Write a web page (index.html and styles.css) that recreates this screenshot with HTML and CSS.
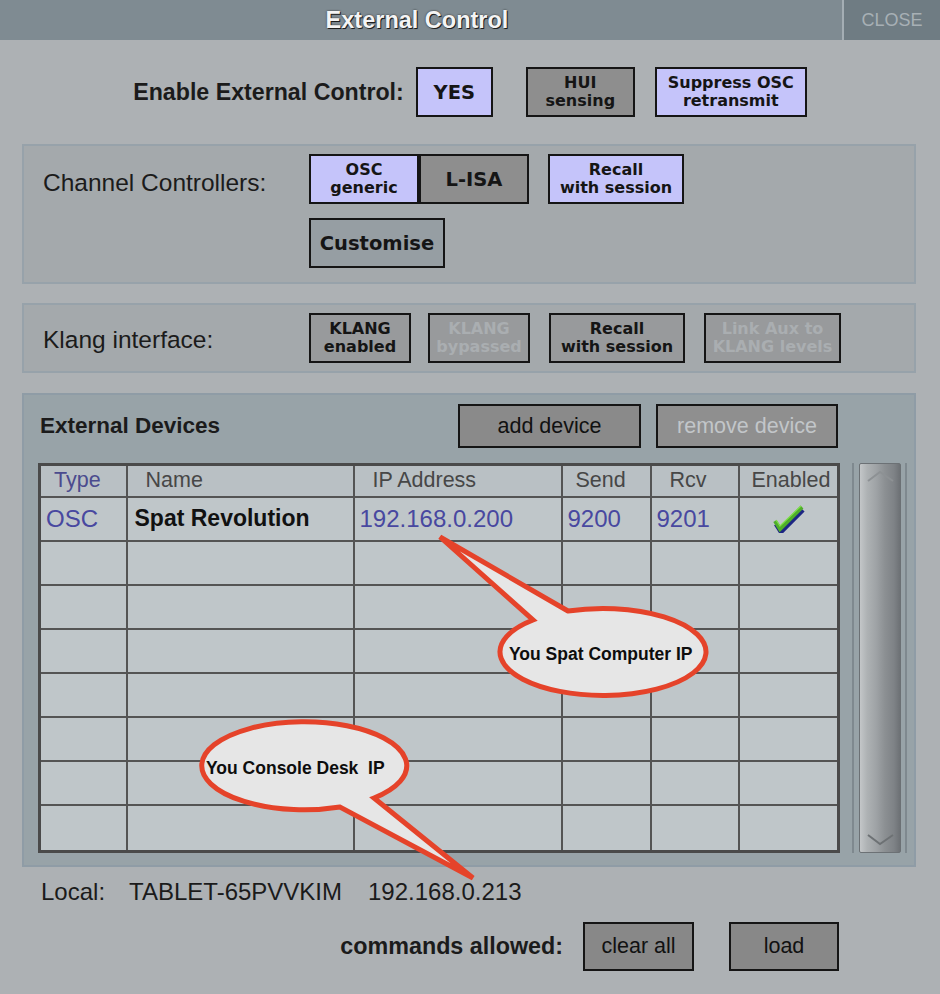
FILE: index.html
```html
<!DOCTYPE html>
<html lang="en">
<head>
  <meta charset="UTF-8">
  <title>External Control</title>
  <link rel="stylesheet" href="styles.css">
</head>
<body>
<div class="titlebar">
  <div class="title">External Control</div>
  <div class="close">CLOSE</div>
</div>

<div class="enable-row">
  <span class="enable-label">Enable External Control:</span>
  <div class="btn btn-one btn-on w-yes">YES</div>
  <div class="btn btn-two btn-dark w-hui">HUI<br>sensing</div>
  <div class="btn btn-two btn-on w-suppress">Suppress OSC<br>retransmit</div>
</div>

<!-- Channel controllers -->
<section class="panel panel-channel">
  <div class="panel-label">Channel Controllers:</div>
  <div class="btn-stack">
    <div class="btn-row">
      <div class="btn btn-two btn-on w110">OSC<br>generic</div>
      <div class="btn btn-one btn-dark w110">L-ISA</div>
      <div class="btn btn-two btn-on w136 gap19">Recall<br>with session</div>
    </div>
    <div class="btn-row">
      <div class="btn btn-one btn-steel w136">Customise</div>
    </div>
  </div>
</section>

<!-- Klang -->
<section class="panel panel-klang">
  <div class="panel-label">Klang interface:</div>
  <div class="btn-row">
    <div class="btn btn-two btn-grey w102">KLANG<br>enabled</div>
    <div class="btn btn-two btn-grey btn-off w102 gap17">KLANG<br>bypassed</div>
    <div class="btn btn-two btn-grey w136 gap19">Recall<br>with session</div>
    <div class="btn btn-two btn-grey btn-off w137 gap19">Link Aux to<br>KLANG levels</div>
  </div>
</section>

<!-- External devices -->
<section class="panel panel-devices">
  <div class="devices-head">
    <div class="devices-title">External Devices</div>
    <div class="btn btn-flat w183">add device</div>
    <div class="btn btn-flat btn-flat-off w182 gap15">remove device</div>
  </div>
  <div class="devices-body">
    <table class="devices">
      <colgroup>
        <col style="width:87px"><col style="width:227px"><col style="width:208px">
        <col style="width:89px"><col style="width:88px"><col style="width:100px">
      </colgroup>
      <thead>
        <tr>
          <th class="col-type">Type</th>
          <th class="col-name">Name</th>
          <th class="col-ip">IP Address</th>
          <th class="col-send">Send</th>
          <th class="col-rcv">Rcv</th>
          <th class="col-en">Enabled</th>
        </tr>
      </thead>
      <tbody>
        <tr>
          <td class="blue">OSC</td>
          <td class="dev-name">Spat Revolution</td>
          <td class="blue">192.168.0.200</td>
          <td class="blue">9200</td>
          <td class="blue">9201</td>
          <td class="check">
            <svg width="34" height="30" viewBox="0 0 34 30">
              <polyline points="4,19 9,27 31,5" fill="none" stroke="#1c2583" stroke-width="4.5" transform="translate(1,2)"/>
              <polyline points="4,18 9,26 31,4" fill="none" stroke="#4fae2a" stroke-width="4"/>
              <polyline points="5,17 9,23 30,3" fill="none" stroke="#7fe04a" stroke-width="1.2"/>
            </svg>
          </td>
        </tr>
        <tr><td></td><td></td><td></td><td></td><td></td><td></td></tr>
        <tr><td></td><td></td><td></td><td></td><td></td><td></td></tr>
        <tr><td></td><td></td><td></td><td></td><td></td><td></td></tr>
        <tr><td></td><td></td><td></td><td></td><td></td><td></td></tr>
        <tr><td></td><td></td><td></td><td></td><td></td><td></td></tr>
        <tr><td></td><td></td><td></td><td></td><td></td><td></td></tr>
        <tr><td></td><td></td><td></td><td></td><td></td><td></td></tr>
      </tbody>
    </table>
    <div class="scrollbar">
      <div class="thumb">
        <svg class="chev" width="41" height="16" viewBox="0 0 41 16">
          <polyline points="8,13 20,4 33,13" fill="none" stroke="#8d9194" stroke-width="2"/>
        </svg>
        <svg class="chev" width="41" height="16" viewBox="0 0 41 16">
          <polyline points="8,3 20,12 33,3" fill="none" stroke="#6d7174" stroke-width="2"/>
        </svg>
      </div>
    </div>
  </div>
</section>

<div class="local">
  <span>Local:</span><span class="host">TABLET-65PVVKIM</span><span class="ip">192.168.0.213</span>
</div>

<div class="commands">
  <span class="commands-label">commands allowed:</span>
  <div class="btn btn-flat btn-cmd w111">clear all</div>
  <div class="btn btn-flat btn-cmd w110 gap35">load</div>
</div>

<!-- Callouts -->
<svg class="callouts" width="940" height="994" viewBox="0 0 940 994">
  <path d="M 568 611 L 440 537 L 533 620 A 103 43.5 0 1 0 568 611 Z" fill="#e6e6e6" stroke="#e5432a" stroke-width="5"/>
  <text x="509" y="660" class="callout-text">You Spat Computer IP</text>
  <path d="M 374 798 L 473 878 L 340 807 A 102.5 44 0 1 1 374 798 Z" fill="#e6e6e6" stroke="#e5432a" stroke-width="5"/>
  <text x="206" y="774" class="callout-text">You Console Desk&#160; IP</text>
</svg>
</body>
</html>
```

FILE: styles.css
```css
* {
  box-sizing: border-box;
}
body {
  margin: 0;
  width: 940px;
  height: 994px;
  background: #adb1b4;
  font-family: "Liberation Sans", Arial, sans-serif;
  color: #1b1b1b;
  position: relative;
  overflow: hidden;
}

/* Шапка */
.titlebar {
  display: flex;
  height: 40px;
  background: #7f8b92;
}
.title {
  flex: 1;
  text-align: center;
  line-height: 40px;
  padding-right: 8px;
  font-size: 23.5px;
  font-weight: bold;
  color: #f4f4f4;
  text-shadow: 1px 1px 0 #1e1e1e, 0 0 2px #2a2a2a;
}
.close {
  width: 98px;
  border-left: 2px solid #a4aeb4;
  background: #6f7c83;
  color: #a7b0b5;
  font-size: 18px;
  line-height: 40px;
  text-align: center;
}

/* Кнопки */
.btn {
  height: 50px;
  border: 2px solid #151515;
  display: flex;
  align-items: center;
  justify-content: center;
  text-align: center;
  font-family: "DejaVu Sans", Verdana, sans-serif;
  font-weight: bold;
  color: #151515;
  flex-shrink: 0;
}
.btn-one {
  font-size: 19.5px;
}
.btn-two {
  font-size: 16px;
  line-height: 18px;
}
.btn-on {
  background: #c5c4fa;
}
.btn-dark {
  background: #8e8e8e;
}
.btn-grey {
  background: #989a9c;
}
.btn-steel {
  background: #969ea3;
}
.btn-off {
  color: #aaaeb1;
}
.btn-flat {
  height: 44px;
  font-family: "Liberation Sans", Arial, sans-serif;
  font-weight: normal;
  font-size: 21.5px;
  background: #8a8a8a;
  color: #111;
}
.btn-flat-off {
  background: #8f8f8f;
  color: #c2c6c9;
}
.btn-cmd {
  height: 49px;
  background: #888888;
}
.w-yes { width: 77px; }
.w-hui { width: 109px; }
.w-suppress { width: 152px; }
.w102 { width: 102px; }
.w110 { width: 110px; }
.w111 { width: 111px; }
.w136 { width: 136px; }
.w137 { width: 137px; }
.w182 { width: 182px; }
.w183 { width: 183px; }
.gap15 { margin-left: 15px; }
.gap17 { margin-left: 17px; }
.gap19 { margin-left: 19px; }
.gap35 { margin-left: 35px; }

.enable-row {
  display: flex;
  justify-content: center;
  align-items: center;
  margin-top: 27px;
  height: 50px;
}
.enable-label {
  font-weight: bold;
  font-size: 23.2px;
  margin-right: 12px;
}
.w-hui {
  margin-left: 33px;
}
.w-suppress {
  margin-left: 20px;
}

/* Панели */
.panel {
  margin: 0 24px 0 22px;
  border: 2px solid #97a2aa;
  background: #a4a9ac;
}
.panel-label {
  padding: 4px 0 0 19px;
  font-size: 24.5px;
  line-height: 50px;
}
.btn-row {
  display: flex;
}
.btn-stack {
  display: flex;
  flex-direction: column;
  gap: 14px;
}
.panel-channel {
  margin-top: 27px;
  height: 140px;
  padding-top: 8px;
  display: grid;
  grid-template-columns: 285px auto;
  align-items: start;
}
.panel-klang {
  margin-top: 19px;
  height: 70px;
  display: grid;
  grid-template-columns: 285px auto;
  align-items: center;
}
.panel-devices {
  margin-top: 20px;
  height: 474px;
  padding-top: 9px;
  background: #98a3a8;
  border-color: #8f9ca6;
}
.devices-head {
  display: flex;
  align-items: center;
  height: 44px;
  padding: 0 76px 0 16px;
}
.devices-title {
  flex: 1;
  font-weight: bold;
  font-size: 22.5px;
}
.devices-body {
  display: flex;
  align-items: stretch;
  margin-top: 15px;
  padding-left: 14px;
}

/* Таблица */
table.devices {
  width: 799px;
  border-collapse: collapse;
  table-layout: fixed;
  border: 3px solid #4a4a4a;
  background: #bfc6c9;
}
.devices th,
.devices td {
  border: 2px solid #545454;
  padding: 0 0 0 5px;
  text-align: left;
  white-space: nowrap;
  overflow: hidden;
}
.devices th {
  height: 32px;
  background: #b9c0c4;
  font-weight: normal;
  font-size: 21.5px;
  color: #474747;
}
.devices td {
  height: 44px;
  font-size: 24px;
}
.devices tbody tr:last-child td {
  height: 47px;
}
.devices th.col-type {
  color: #4b4b8e;
  padding-left: 13px;
}
.devices th.col-name { padding-left: 18px; }
.devices th.col-ip { padding-left: 18px; }
.devices th.col-send { padding-left: 13px; }
.devices th.col-rcv { padding-left: 18px; }
.devices th.col-en { padding-left: 12px; }
.devices td.blue {
  color: #4848a0;
}
.devices td.dev-name {
  font-weight: bold;
  font-size: 23px;
  color: #111;
  padding-left: 7px;
}
.devices td.check {
  text-align: center;
  padding: 4px 0 0;
}

/* Полоса прокрутки */
.scrollbar {
  width: 55px;
  margin-left: 12px;
  border-left: 2px solid #7f898f;
  border-right: 2px solid #7f898f;
  padding: 0 4px 0 5px;
}
.thumb {
  height: 100%;
  border: 1px solid #6c7175;
  border-radius: 2px;
  background: linear-gradient(to right, #c3c6c8 0%, #aeb2b4 18%, #9fa3a6 40%, #8c9093 62%, #7e8286 85%, #6d7175 100%);
  display: flex;
  flex-direction: column;
  justify-content: space-between;
  padding: 4px 0;
}
.chev {
  display: block;
}

/* Низ */
.local {
  padding: 12px 0 0 41px;
  font-size: 24px;
  line-height: 26px;
}
.host {
  margin-left: 24px;
}
.ip {
  margin-left: 26px;
}
.commands {
  display: flex;
  justify-content: flex-end;
  align-items: center;
  margin-top: 17px;
  padding-right: 101px;
}
.commands-label {
  font-weight: bold;
  font-size: 23.3px;
  margin-right: 20px;
}

/* Выноски */
.callouts {
  position: absolute;
  top: 0;
  left: 0;
  pointer-events: none;
}
.callout-text {
  font-family: "Liberation Sans", Arial, sans-serif;
  font-weight: bold;
  font-size: 17.5px;
  fill: #0d0d0d;
}
```
